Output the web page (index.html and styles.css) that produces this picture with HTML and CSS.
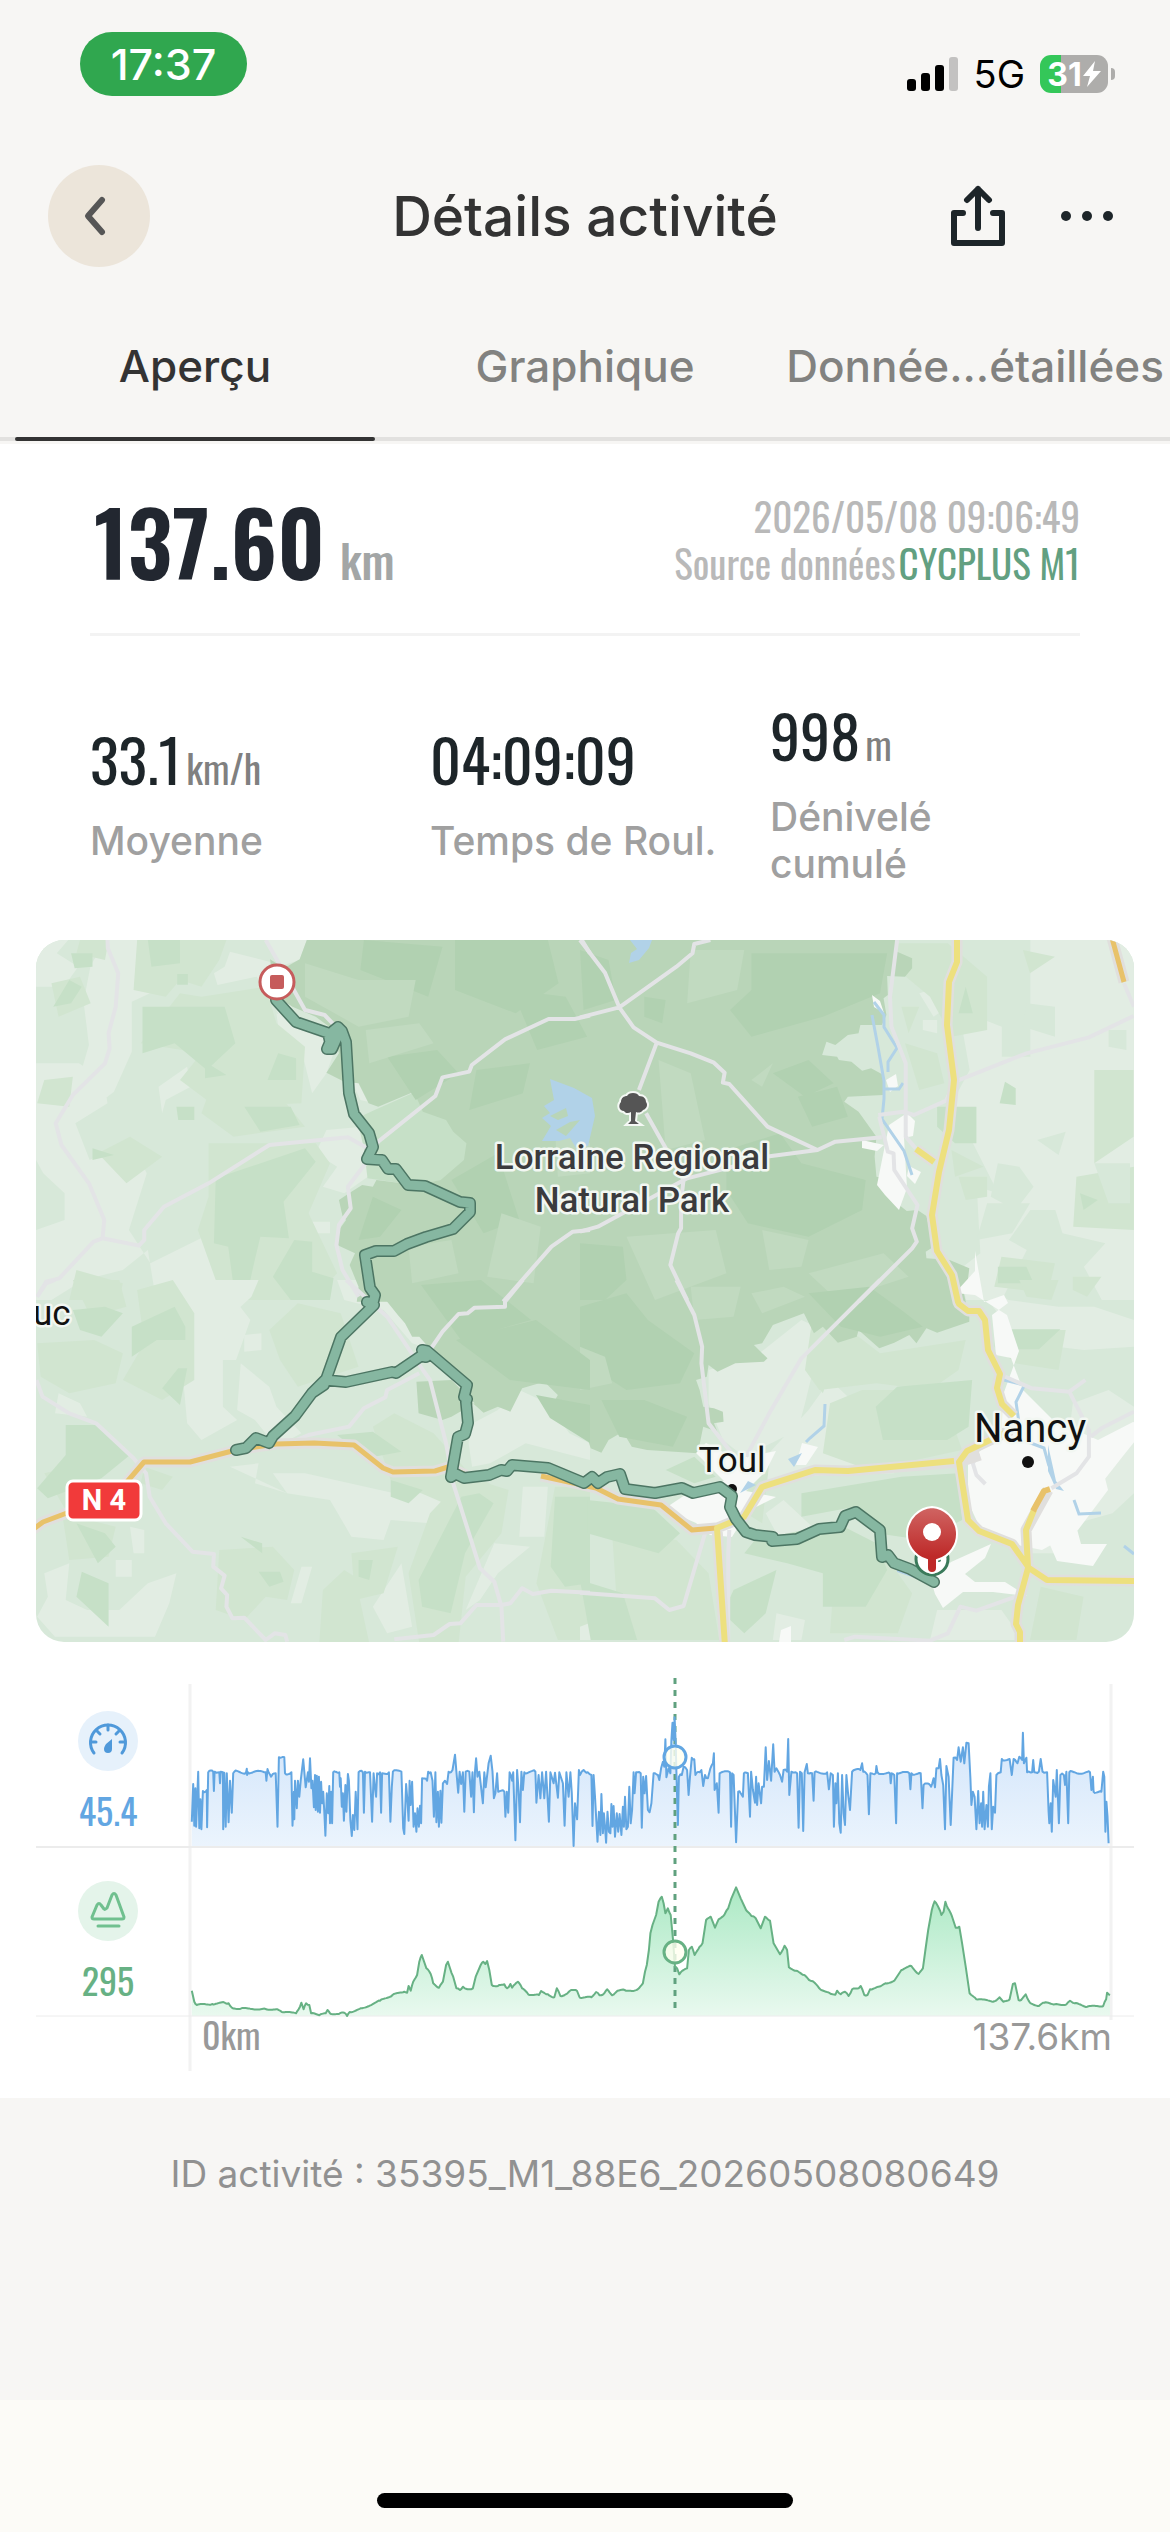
FILE: index.html
```
<!DOCTYPE html>
<html lang="fr">
<head>
<meta charset="utf-8">
<title>Détails activité</title>
<meta name="viewport" content="width=device-width">
<link rel="stylesheet" href="styles.css">
</head>
<body>
<header class="top">
  <div class="status">
    <span class="clock">17:37</span>
    <div class="status-right">
      <svg class="signal" viewBox="0 0 52 34" aria-hidden="true">
        <rect x="0" y="22" width="9" height="12" rx="3"/>
        <rect x="14" y="16" width="9" height="18" rx="3"/>
        <rect x="28" y="8" width="9" height="26" rx="3"/>
        <rect x="42" y="0" width="9" height="34" rx="3" fill="#c3c2c1"/>
      </svg>
      <span class="network">5G</span>
      <div class="battery">
        <span class="battery-level">31<svg viewBox="0 0 18 26" aria-hidden="true"><path d="M12 0 0 15h7L4 26 18 10h-8z" fill="#fff"/></svg></span>
        <span class="battery-tip"></span>
      </div>
    </div>
  </div>
  <div class="titlebar">
    <button class="back" type="button" aria-label="Retour">
      <svg viewBox="0 0 26 42" aria-hidden="true"><path d="M20 5 6 21 20 37" fill="none" stroke="#565656" stroke-width="6" stroke-linecap="round" stroke-linejoin="round"/></svg>
    </button>
    <h1>Détails activité</h1>
    <div class="actions">
      <button class="icon-button" type="button" aria-label="Partager">
        <svg class="share" viewBox="0 0 56 62" aria-hidden="true"><g fill="none" stroke="#1d2529" stroke-width="6" stroke-linecap="round" stroke-linejoin="round"><path d="M28 43V4M17 15 28 4l11 11M13 28H4v30h48V28h-9"/></g></svg>
      </button>
      <button class="icon-button" type="button" aria-label="Plus">
        <svg class="more" viewBox="0 0 54 12" aria-hidden="true"><g fill="#1d2529"><circle cx="6" cy="6" r="5"/><circle cx="27" cy="6" r="5"/><circle cx="48" cy="6" r="5"/></g></svg>
      </button>
    </div>
  </div>
  <nav class="tabs">
    <a class="tab tab-active" href="#apercu">Aperçu</a>
    <a class="tab" href="#graphique">Graphique</a>
    <a class="tab" href="#donnees">Donnée...étaillées</a>
  </nav>
</header>

<main>
  <section class="summary">
    <div class="headline">
      <p class="distance">137.60<span class="distance-unit">km</span></p>
      <p class="source">2026/05/08 09:06:49<br>Source données<span class="device">CYCPLUS M1</span></p>
    </div>
    <dl class="stats">
      <div class="stat"><dd>33.1<span class="unit">km/h</span></dd><dt>Moyenne</dt></div>
      <div class="stat"><dd>04:09:09</dd><dt>Temps de Roul.</dt></div>
      <div class="stat"><dd>998<span class="unit">m</span></dd><dt>Dénivelé cumulé</dt></div>
    </dl>
  </section>

  <svg class="map" viewBox="0 0 1098 702" role="img" aria-label="Parcours">
    <defs>
      <path id="route" d="M240 60 260 82 292 93 294 102 291 109 296 109 300 100 297 91 302 87 306 91 310 102 313 153 318 174 333 193 337 207 331 219 346 220 352 229 360 229 372 245 389 246 424 262 434 263 434 272 417 289 390 297 371 304 358 311 340 311 329 315 334 348 339 355 337 363 331 362 338 365 305 397 288 445 276 453 259 476 237 496 233 503 220 498 210 508 200 510 210 508 220 498 233 503 237 496 259 476 276 453 289 440 310 442 356 432 360 433 385 416 390 417 386 410 391 411 431 445 428 457 431 459 430 462 432 483 429 494 422 497 415 537 420 534 428 538 453 535 465 530 471 531 476 525 512 528 548 543 556 537 562 543 571 537 584 534 589 549 619 553 646 548 657 553 684 547 696 556 694 567 700 579 710 592 719 595 737 597 736 601 761 599 783 589 804 587 809 576 820 572 844 590 846 617 852 615 858 623 874 629 898 642"/>
      <linearGradient id="pin" x1="0" y1="0" x2="0" y2="1"><stop offset="0" stop-color="#d06563"/><stop offset=".75" stop-color="#be2a29"/></linearGradient>
    </defs>
    <rect width="1098" height="702" fill="#d7e8d9"/>

    <!-- land cover, north west -->
    <g transform="translate(-6 -10) scale(.35714 .33333)">
      <path class="pale" d="M17 30h90L75 70l60 40-40 60H17zM215 30h130l-25 110 25 45-60 30v150l-50 120-60 50-40-80 30-110-15-130 20-110zM560 65l110 30 60 100 5 90-40 35V250l-60-110-110 25-10-35 30-20zM665 30h110l-20 60-60 20zM17 400h120l70 50 10 70-90 60 40 110 110-60 50 100-50 170 60 100 150-80 80 80v100l50 70-40 120H380L330 960l-70 60-110 30-90 60H17V900l80-30V790l-60-60-20-40zM360 470l80-60 10 60-70 40-10 40zM690 250l170 90-30 90-40 60-30-130-60-30zM830 600l100-10 50 60-20 80-80 60-60-20 40-60-60-40zM780 875h60v35h-60zM900 450l45 10 20 60-40-10z"/>
      <path class="mid" d="M140 30h80l-10 60-80-20zM300 30h250l-20 60-50 80-60-20-40 50-90-20zM480 200l180-30 30 110 80 70-10 170-240 10-100-80 60-80-170-30 110-150zM60 160l80-20 30 80-90 40zM500 490l180-20 90 120-200 30-90-70zM500 640l300 0 40 60-60 150 80 180-70 80H540L470 900l30-100zM130 1020l130 40-10 50H110zM40 450l80-10-10 90-90-10zM280 620l90 60-100 80-80-90z"/>
      <path class="deep" d="M315 230h230l30 110-80 80-90-80-90 30zM330 30h90v70l-80 10zM115 70h60v40l-50 5zM110 150l35 20-30 50-50 10zM695 370l50 15v65h-80zM600 530h130l25 55-110 20zM520 745l250-90 30 40-90 120 15 110-80-5-20 90-20 100h-30l-20-160-40-10zM680 1040l60-110 50 5v90l60 20-10 65h-110zM410 530h50v40h-45zM412 132h30v32h-30zM490 395l60 40-60 10zM175 655l60 20-60 15zM1080 485l90 85 55 70-10 60-60 50-80 15-130-20-10-90-20-90 50-25z"/>
    </g>
    <!-- land cover, south west -->
    <g transform="translate(-6 340) scale(.35714 .33333)">
      <path class="pale" d="M390 0h250l-20 50-60 60-20 80v190l40 40-100 60-40-50-10-120-10-130-40-170zM590 250l80 70 20 60 70 80-70 40-60-80-50-30zM600 165l48-5v50l-48 5zM560 560l80-10-10 60 90 30-40-60 90 0 250 60 240 0-80 110-60-20-110-10-20 60-90-10-60-110-120-20zM860 0h70l120 60 60 90 20 60-60-20-80-100-110-30zM1300 790l100 10-90 80-50 80-40 30zM1380 620h70l-10 150h-70zM40 880l70-30-10 110 60 30 90 0 80-80 80-30-20 90-40 100H70L20 1010l30-60zM960 980l80-130 30 190-70 20zM760 860h30l-30 110h-30zM240 840h45v50h-45zM280 740l40 10v70h-30zM80 340l60 30 20 40-90-10zM590 940h40v35h-45zM1240 430l70-40 60-60 80 40 60 90 58 30v50l-180-50-100 60-50 10-10-70z"/>
      <path class="mid" d="M20 190l160-10 80 40-20 90-130 30-80-50zM300 30l100-30 60 100v200l-90 60-110-60 60-110zM750 70l120 30 50 160-170 60-50-80-30-90zM120 0h130l20 80-100 30zM40 580l80-20 60 60-80 70zM530 810l150-10 60 70-20 90-60-10-60 70-80-30zM820 930l60-60 30 20 40 200H810zM900 820l130-20-40 140-80 20zM1060 880l60-180 80-90 80 0 60 20-20 130-100 130-20 200H1090zM960 440l60-40 110 60 100 120 110 60-180 30-150-70zM1470 620h98v460h-90l-60-170zM90 700l150 40-20 90-110 10zM320 560l80 30-30 40-60-20z"/>
      <path class="deep" d="M285 140l120-60 30 60v40l-80 0-70 50zM120 90l90-10 50 20-60 70-60-20zM415 265h25l-20 110-50-50zM100 435l90 0 90 90-80 70-150 60-30-30 80-100zM130 730l80 30 30 40-50 50zM145 875l75 35v130l-90-90zM1088 900l120-250 50-10 40 30-80 150-40 180-80-20zM1470 650l98 0v260l-70 10-40-60zM1010 600l90 30-40 40-50-20zM860 465l100-10 80 60-100 20zM640 875h60l10 30-40 15zM920 840h40l-10 60-30-10zM590 770l60 20 0 30z"/>
    </g>
    <!-- land cover, north east -->
    <g transform="translate(544 -10) scale(.35714 .33333)">
      <path class="pale" d="M1060 30h491v1080h-90l-50-100 60-70-120-30-20-70h-70l-60 90 50 30-70 150h-100l-20-90 60-50-10-200 60 20-80-170-60-80 60-120-30-180 120 50v90h80V30zM950 190l60-20 20 60-40 30zM960 270h40v40l-40-10z"/>
      <path class="mid" d="M890 40h140l110 100v160l-100 20-60-120-90-80zM1440 420h110v200l-110 80zM1390 740l161-30v190l-170-10zM1180 980l150 20-20 90-150-20zM900 230h50l-30 80zM910 340l90 30 20 90-70 20zM1040 660l90 50-80 30zM1240 60l90 20-70 50zM1380 1040h80l-40 60-40-20zM1060 740l80 0v60l-60 10z"/>
      <path class="deep" d="M1000 530h110v110h-60l-50-50zM1170 1010h80l20 50h-100zM1400 790l50 20-40 30zM1080 170l20 80-40 0zM1190 455l30 20v50l-45-5z"/>
      <path class="base" d="M1250 220l80 10v90l-90-30zM1170 700l60 10 40 60-50 70-70-40zM1280 630l80-25-20 70zM1480 300h50v60l-50-10zM1140 820l120 0-50 90-100 20zM1440 700h100v120h-60z"/>
    </g>
    <!-- land cover, south east -->
    <g transform="translate(544 340) scale(.35714 .33333)">
      <path class="pale" d="M360 270l130-40 130-110 60 30-50 220-20 80-150 80-60-50-40-110zM700 300l60 60 60 40 60 180-300 10-90 60 30-120 120-140zM1100 0l100 60 140 20 100 0 111 40v80l-140 10-160-20-60-60zM1380 370l100-40 71 50v260l-60 60-100 30-60 90h-100l60-180 60-20zM520 700l50-40 80 80-90 40zM1000 990h180l60 90H980zM0 1040l120-50 100 90H0zM550 1000l80 20-10 60h-80z"/>
      <path class="mid" d="M650 120l130 50 60 50 240-40-20 90-80 60-150-20-160 20-40-60zM700 370l90-40 220 0 60 180-260 60-130-50zM1160 150h200l-20 120-120-20-60-50zM1230 0l110 0-20 60-70-10zM430 560l100-10-20 180-90-60zM720 780l150 70 60 90-40 120H700zM90 760l180 20 90 100 30 200H110zM1290 920l120 30-20 130h-130zM640 280l60 0-20 60z"/>
      <path class="deep" d="M828 380l60-60 210-20-10 140-60 40-180 0zM1165 148h180l-60 60-120 0zM620 640l280-50 160-10 10 140-110 60-130-20-60-80-150 30zM490 780l230-50 110 60 30 80-60 110-120 0 0-100-100-30-120-30zM20 660l180 20 80 80-60 60-200-60zM430 930l120-60-30 130-60 60-60-60zM240 570l80-40 60 60-60 20z"/>
      <path class="deep" d="M0 900l120 40 40 140H30z"/>
    </g>

    <!-- regional park -->
    <g class="park">
      <path transform="translate(-6 -10) scale(.35714 .33333)" d="M775 30 755 88 722 108 690 100 672 88 690 200 735 230 800 260 850 300 865 370 830 428 880 455 920 460 948 520 975 530 1075 485 1100 545 1165 570 1185 605 1222 640 1215 690 1150 750 1080 765 970 750 960 770 930 765 900 785 865 810 875 858 885 870 865 900 860 945 910 970 895 1005 920 1070 915 1115H1570V30z"/>
      <path transform="translate(-6 340) scale(.35714 .33333)" d="M918 0 985 45 1030 105 1050 130 1070 170 1090 170 1115 200 1165 240 1240 370 1270 398 1310 380 1345 395 1378 325 1440 305 1478 345 1465 370 1540 445 1570 490V0zM1082 305 1180 300 1245 370 1180 410 1155 420 1088 400z"/>
      <path transform="translate(544 -10) scale(.35714 .33333)" d="M0 30H890L888 65 930 85 930 115 910 140 860 138 862 195 850 205 858 255 845 285 785 285 780 310 750 315 715 345 690 335 678 375 720 380 725 390 760 395 790 422 815 415 850 435 848 495 750 500 740 515 780 545 830 620 825 680 830 740 885 750 870 805 915 843 945 840 970 858 990 950 968 965 970 985 1035 990 1090 1015 1085 1060 1060 1075 1068 1115H0z"/>
      <path transform="translate(544 340) scale(.35714 .33333)" d="M0 0H1066L1090 110 1090 125 1000 158 970 145 942 190 922 165 880 188 838 205 780 150 775 170 722 188 680 140 655 160 627 100 540 135 510 190 487 195 525 235 515 245 435 250 385 275 360 255 355 290 325 300 335 330 345 380 375 385 400 395 402 425 375 430 385 455 345 440 330 520 188 510 145 500 120 455 80 480 60 518 30 505 15 455 0 450z"/>
    </g>
    <g transform="translate(-6 -10) scale(.35714 .33333)">
      <path class="park-dark" d="M935 30l220 20-40 150-190-80zM1190 30h260l30 130-120 90-170-70zM1000 380l140-20 60 70-120 80zM1250 420l150-20-20 90-150 50zM1350 180l150 20 60 120-140 40zM1180 750l130-80 60 200-100 40zM960 800l80 40-60 80-60 10z"/>
      <path class="park-light" d="M770 100l150 50 160 0-20 110-140 30-150-90zM940 300l150-20 40 60-180 60zM1320 850l110 40-20 170-130-20zM1060 950l120-20 20 100-130 30zM1470 600l98 40v90l-90 10z"/>
    </g>
    <g transform="translate(544 -10) scale(.35714 .33333)">
      <path class="park-dark" d="M480 70h380l-20 120-160 70-200 60-60-80 60-60zM0 60l80 30 20 120-90 30zM180 200l60 10-10 70-50-20zM610 500l110-30 30 90-100 30zM410 660l150-50 60 90 180 50-10 90-150 80-170-40-60-100zM0 940l120 10 10 100-60 60H0zM540 430l100-40 70 70-80 40z"/>
      <path class="park-light" d="M310 60h150l-20 120-140 40zM220 390l90 40 40 200-110 30zM130 920l250-20 30 130-200 80zM480 450l60-50-30 70zM510 900l130 30-20 80-90 10zM640 1030l210-60 70 70-200 70z"/>
    </g>
    <g transform="translate(544 340) scale(.35714 .33333)">
      <path class="park-dark" d="M0 80l130-40 60 80 130 100-40 90-150 20-130-90zM640 40l170-20 90 70 60 50-120 30-110-30zM60 360l120 0 120 50-40 90-150-30z"/>
      <path class="park-light" d="M0 200l70 30 20 80-90 20zM310 20l140 0-20 90-110 10zM480 40l90-20 60 30-120 50z"/>
    </g>
    <path class="park-dark" d="M385 345l60-5 50 40-70 20zM420 400l80-20 54 40v30l-80-10zM500 455l54 10v38l-40-25z"/>

    <!-- towns -->
    <g fill="#f7f9f7">
      <path d="M841 245l12-60 18-12 8 8-2 15-9 2 3 50-8 22-14-15zM848 205l-22-5v8l15 3zM836 55l8 6 4 12-10-6zM850 140l10-6 2 12-8 6zM873 226l12 6-6 12-8-8z"/>
      <path d="M948 362l20-7 4 8-16 12 4 40 15 3 12 32 30 30 45 20 35-18 14 4-24 30-22 28-28 30 8 30 26 0-14 22-36-5-14-32-30-22-12-62 2-50 16-44-12-36-32-20-20-2 20-22 0-20z"/>
      <path d="M932 520l40-30 50 0 40 20 10 40-30 40-36 20-30-6-30-12-14-30z"/>
      <path d="M670 503l30 16 40-8-10 20-20 20 30 6-28 14-16 26-22-2-14-12-32-14 30-20 30-8-28-28z"/>
      <path d="M895 640l20-18 40-18-6 14-20 16 10 8 30 0 22 14-34-4-30 0-20 16-8-14z"/>
      <path d="M766 503l16 4-12 18-10 0zM745 690l10-4 0 16-12 0z"/>
    </g>

    <!-- water -->
    <g fill="#b1d2e8">
      <path d="M514 139 538 148 556 158 559 176 552 206 540 208 534 198 523 201 506 201 515 186 506 178 514 173 508 166 518 160z"/>
      <path d="M594 0h22l-3 8-10 12-10 3 2-10 6-4z"/>
      <path d="M766 513l-8 14-6-8zM720 545l-16 8 8-12zM861 626l28 6-4 8-24-8zM1012 505l8 36 8 10-8-2-8-18z"/>
    </g>
    <path d="M514 176l16-8 2 8-10 4zM520 190l14-8 10-2-14 16z" fill="#b9d5b8"/>
    <g fill="none" stroke="#b1d2e8" stroke-width="3">
      <path d="M838 62l10 13v12l13 21-9 14v10M836 75l6 32 6 34v18l-2 20 22 32 8 24M848 149l15 0 4-6"/>
      <path d="M789 464l-1 22-14 12-4 4M988 446l-8 16 4 28M968 440l20 5M992 502l16 6 5 18M1038 560l5 14 22-1M1088 606l10 8"/>
    </g>

    <!-- minor roads -->
    <g class="road">
      <g transform="translate(-6 -10) scale(.35714 .33333)">
        <path d="M217 30 218 55 247 130 240 230 220 310 223 355 210 400 120 495 72 580 88 645 165 760 208 870 203 925 305 947 320 930V900L375 830 500 760 670 645 890 622 945 655M203 925 178 935 82 1045 45 1055 20 1100M660 30 700 105 770 240 825 255 865 300M1568 257 1525 267H1452L1330 328 1237 405 1230 425 1155 442 1135 498 975 635 940 700 890 770 898 835 865 885 858 945 875 1020 920 1100M1568 900 1520 905 1460 950 1325 1115M1545 30 1568 70"/>
      </g>
      <g transform="translate(-6 340) scale(.35714 .33333)">
        <path d="M20 50 45 10 70 0M18 300 35 350 110 400 185 430 290 535 325 580 335 650 380 730 455 815 515 822 513 860 545 887 535 925 552 945 550 980 567 1015 600 1013 660 1080 685 1060 715 1065 720 1085M885 0 1000 110 1100 270 1120 300 1165 490 1185 610 1260 865 1300 905 1320 980 1325 1085M1380 0 1330 65V80L1245 83 1225 100 1200 102 1155 155 1120 210M1090 280 1000 330 995 352 935 385 893 440 780 465 700 500M1568 938 1460 932 1408 942 1378 925 1345 970 1320 975 1250 975 1205 1030 1175 1032 1130 1065 1020 1078"/>
      </g>
      <g transform="translate(544 -10) scale(.35714 .33333)">
        <path d="M0 30 70 128 110 232 150 292 215 338 310 370 375 398 405 428 400 458 418 462 525 590 665 660 715 635 845 622M0 262 110 232 270 110 315 70 320 42 365 30M215 338 165 480M185 550 290 750M520 680 665 660M525 683 300 745 50 890 0 905M290 750 283 810V895L275 910 253 1005 300 1110M888 30 868 200 872 290 912 400V620L940 655M835 555 905 545 935 555 1025 512 1050 455 1250 370 1425 322 1550 258M1523 160 1551 230M838 560 862 665 878 670 880 720 945 825 930 895 943 935 930 955 780 1115"/>
      </g>
      <g transform="translate(544 340) scale(.35714 .33333)">
        <path d="M270 0 320 105 342 200 340 250 360 430 425 520M840 0 620 235 530 400 465 530M0 938 210 955 250 990 290 978 350 760M415 1080V820L418 750M1190 290 1265 325 1370 335 1415 300M1370 335 1425 450V530L1390 580 1320 625M1430 470 1460 445 1551 395M1115 520 1100 550 1110 585 1135 612M740 1080 770 1070 980 1082 1030 1060 1065 980 1110 992 1220 950"/>
      </g>
    </g>

    <!-- main roads -->
    <g id="main-roads" fill="none" stroke-linejoin="round">
      <g class="casing">
        <path d="M-4 590 7 582 60 562M90 543 108 522 154 522 200 510 240 504 278 503 318 505 347 528 357 532 399 531 412 527 430 535M505 536 560 548 582 559 625 565 656 590 680 588"/>
        <path d="M921 -4V22L913 42 911 85 918 140 913 190 903 232 896 275 901 311 916 335 922 362 923 364 932 371H943L949 380 952 410 964 434 961 448 966 464 978 476M944 515 923 522 812 531 779 530 726 547 708 577 681 588 689 706M975 490 931 511 923 522 932 580 943 591 976 604 993 628 1011 640 1100 641M1012 550 990 590 992 628 982 665 980 684 984 692V706M880 209 898 222M1076 -2 1088 42"/>
      </g>
      <path stroke="#e8c26a" stroke-width="5" d="M-4 590 7 582 60 562M90 543 108 522 154 522 200 510 240 504 278 503 318 505 347 528 357 532 399 531 412 527 430 535M505 536 560 548 582 559 625 565 656 590 680 588M1076 -2 1088 42"/>
      <path stroke="#ede07e" stroke-width="6" d="M921 -4V22L913 42 911 85 918 140 913 190 903 232 896 275 901 311 916 335 922 362 923 364 932 371H943L949 380 952 410 964 434 961 448 966 464 978 476M918 521 812 531 779 530 726 547 708 577 681 588 689 706M975 490 931 511 923 522 932 580 943 591 976 604 993 628 1011 640 1100 641M998 570 990 590 992 628 982 665 980 684 984 692V706M880 209 898 222"/>
      <path stroke="#e8c26a" stroke-width="6" d="M1014 549 1008 551 997 571"/>
    </g>

    <circle cx="696" cy="549" r="5" fill="#111"/>
    <g fill="none" stroke-linecap="round" stroke-linejoin="round">
      <use href="#route" stroke="#4c7563" stroke-width="12"/>
      <use href="#route" stroke="#86b7a1" stroke-width="9"/>
    </g>

    <circle cx="241" cy="42" r="17" fill="#fff" stroke="#c65c5c" stroke-width="3"/>
    <rect x="234" y="35" width="14" height="14" rx="2" fill="#c65c5c"/>

    <circle cx="896" cy="619" r="16" fill="#fff" stroke="#3a7a5a" stroke-width="3"/>
    <circle cx="903" cy="620" r="2" fill="#3a7a5a"/>
    <path d="M896 567a27 27 0 0 1 5 53v8a5 5 0 0 1-10 0v-8a27 27 0 0 1 5-53z" fill="url(#pin)" stroke="#fff" stroke-width="2"/>
    <circle cx="896" cy="592" r="9" fill="#fff"/>

    <g stroke="#f4f8f4" stroke-width="4" paint-order="stroke" fill="#555">
      <path d="M597 153c3 0 5 1 6 3 5 0 7 3 7 6 2 2 1 7-3 8-2 3-5 3-7 2l-1 9 4 3h-11l3-3v-9c-3 2-6 1-7-1-5 0-6-6-3-9 0-4 3-6 6-6 1-2 3-3 6-3z"/>
    </g>

    <g class="label">
      <text x="596" y="229" font-size="35" font-weight="500" text-anchor="middle">Lorraine Regional</text>
      <text x="596" y="272" font-size="35" font-weight="500" text-anchor="middle">Natural Park</text>
      <text class="city" x="696" y="532" font-size="35" text-anchor="middle">Toul</text>
      <text class="city" x="994" y="502" font-size="40" text-anchor="middle">Nancy</text>
      <text class="city" x="-3" y="385" font-size="35">uc</text>
    </g>
    <circle cx="992" cy="522" r="6" fill="#111"/>

    <rect x="31" y="541" width="74" height="39" rx="6" fill="#f13a3a" stroke="#fff" stroke-width="3"/>
    <text class="shield" x="68" y="570" text-anchor="middle">N 4</text>
  </svg>

  <section class="charts">
    <svg class="plot" viewBox="0 0 1098 394" aria-hidden="true">
      <defs>
        <linearGradient id="speed-fill" gradientUnits="userSpaceOnUse" x1="0" y1="40" x2="0" y2="169"><stop offset="0" stop-color="#cfe3fa"/><stop offset="1" stop-color="#ebf4fd"/></linearGradient>
        <linearGradient id="climb-fill" gradientUnits="userSpaceOnUse" x1="0" y1="210" x2="0" y2="339"><stop offset="0" stop-color="#abe9c4"/><stop offset="1" stop-color="#e9f9ef"/></linearGradient>
      </defs>
      <path d="M154 7V394M1075 7V343" stroke="#f2f2f2" stroke-width="3"/>
      <path id="speed-area" fill="url(#speed-fill)"/>
      <path id="climb-area" fill="url(#climb-fill)"/>
      <path d="M0 170H1098" stroke="#ececec" stroke-width="2"/>
      <path d="M0 339H1098" stroke="#ececec" stroke-width="1"/>
      <path d="M639 1V331" stroke="#60a17f" stroke-width="3" stroke-dasharray="6 6"/>
      <path id="speed-line" fill="none" stroke="#62a6e2" stroke-width="2" stroke-linejoin="round"/>
      <path id="climb-line" fill="none" stroke="#67b184" stroke-width="2" stroke-linejoin="round"/>
      <circle cx="639" cy="80" r="11" fill="#fffff0" fill-opacity=".8" stroke="#62a6e2" stroke-width="3"/>
      <circle cx="639" cy="275" r="11" fill="#fffff0" fill-opacity=".8" stroke="#67b184" stroke-width="3"/>
    </svg>
    <div class="metric metric-speed">
      <svg class="badge" viewBox="0 0 60 60" aria-hidden="true"><circle cx="30" cy="30" r="30" fill="#e6f1fb"/><g fill="none" stroke="#4f99da" stroke-width="3" stroke-linecap="round"><path d="M16 42A17.500 17.500 0 1 1 44 42"/><path d="M30 14v5M13 31h5M42 31h5M19 20l3 3M41 20l-3 3"/></g><path d="M34 28v10a4 4 0 0 1-8 0c0-2 1-3 2-5z" fill="#4f99da"/></svg>
      <span>45.4</span>
    </div>
    <div class="metric metric-climb">
      <svg class="badge" viewBox="0 0 60 60" aria-hidden="true"><circle cx="30" cy="30" r="30" fill="#e4f4ea"/><g fill="none" stroke="#70c08f" stroke-width="3" stroke-linecap="round" stroke-linejoin="round"><path d="M14 36l5-12q2-3 4 0l3 4q1 1 3-1l5-13q2-3 4 0l8 22q0 2-2 2H16q-2 0-2-2zM20 45h21"/></g></svg>
      <span>295</span>
    </div>
    <div class="axis"><span class="axis-start">0km</span><span class="axis-end">137.6km</span></div>
  </section>
</main>

<footer class="activity-id">ID activité : 35395_M1_88E6_20260508080649</footer>
<div class="home"><span class="home-bar"></span></div>
<script src="charts.js"></script>
</body>
</html>
```
FILE: styles.css
```
* { box-sizing: border-box; }
body {
  margin: 0;
  min-height: 100vh;
  display: flex;
  flex-direction: column;
  background: #f7f6f4;
  color: #333;
  font-family: Inter, "Noto Sans", sans-serif;
}
h1, p, dl, dd, dt { margin: 0; font-weight: 400; }
button { border: 0; padding: 0; background: none; cursor: pointer; }
svg { display: block; }

/* header */
.status {
  display: flex;
  justify-content: space-between;
  height: 132px;
  padding: 32px 55px 0 80px;
}
.clock {
  width: 167px;
  height: 64px;
  border-radius: 32px;
  background: #30a74f;
  color: #fff;
  font-size: 43px;
  font-weight: 500;
  line-height: 64px;
  text-align: center;
}
.status-right {
  display: flex;
  align-items: center;
  height: 38px;
  margin-top: 23px;
  gap: 15px;
  color: #000;
}
.signal { width: 52px; height: 34px; }
.network { font-size: 38px; font-weight: 400; line-height: 38px; }
.battery { display: flex; align-items: center; gap: 3px; }
.battery-level {
  display: flex;
  align-items: center;
  justify-content: center;
  gap: 1px;
  width: 68px;
  height: 38px;
  border-radius: 11px;
  background: linear-gradient(90deg, #34c759 21px, #aeadab 21px);
  color: #fff;
  font-size: 32px;
  font-weight: 700;
}
.battery-level svg { width: 18px; height: 26px; }
.battery-tip { width: 4px; height: 12px; border-radius: 0 4px 4px 0; background: #aeadab; }

.titlebar {
  display: grid;
  grid-template-columns: 1fr auto 1fr;
  align-items: center;
  height: 168px;
  padding: 0 48px;
}
.back {
  display: flex;
  align-items: center;
  justify-content: center;
  width: 102px;
  height: 102px;
  padding-right: 8px;
  border-radius: 50%;
  background: #ece5da;
}
.back svg { width: 26px; height: 42px; }
h1 { font-size: 55px; font-weight: 500; line-height: 66px; }
.actions { display: flex; justify-content: flex-end; align-items: center; gap: 54px; padding-right: 8px; }
.share { width: 56px; height: 62px; }
.more { width: 54px; height: 12px; }

.tabs {
  display: grid;
  grid-template-columns: repeat(3, 1fr);
  height: 144px;
  border-bottom: 3px solid #f7f6f4;
  box-shadow: inset 0 -4px #e2e1df;
}
.tab {
  display: flex;
  flex-direction: column;
  justify-content: space-between;
  align-items: center;
  padding-top: 38px;
  color: #828280;
  font-size: 44px;
  font-weight: 500;
  line-height: 56px;
  text-decoration: none;
  white-space: nowrap;
}
.tab-active { color: #333; }
.tab-active::after {
  content: "";
  width: calc(100% - 30px);
  height: 4px;
  border-radius: 4px;
  background: #333;
}

/* totals */
main { background: #fff; }
.summary, .metric, .axis-start {
  font-family: Oswald, "Liberation Sans Narrow", "Roboto Condensed", "Liberation Sans", sans-serif;
}
.summary { padding: 48px 90px 0; }
.headline {
  display: flex;
  justify-content: space-between;
  height: 144px;
  border-bottom: 3px solid #f3f3f3;
}
.distance { padding-left: 4px; color: #222730; font-size: 88px; font-weight: 600; line-height: 96px; }
.distance-unit { margin-left: 15px; color: #a3a6a6; font-size: 46px; font-weight: 500; }
.source { color: #b9b9b9; font-size: 39px; line-height: 47px; text-align: right; }
.device { margin-left: 3px; color: #62a081; }
.stats {
  display: grid;
  grid-template-columns: repeat(3, 340px);
  align-items: center;
  height: 304px;
  padding-top: 10px;
}
.stat { display: flex; flex-direction: column; gap: 24px; }
.stat dd { color: #1d2529; font-size: 60px; line-height: 70px; }
.unit { margin-left: 5px; color: #808080; font-size: 39px; line-height: 0; }
.stat dt {
  max-width: 300px;
  color: #a0a0a0;
  font-family: Inter, "Noto Sans", sans-serif;
  font-size: 39px;
  font-weight: 500;
  line-height: 47px;
}
.stat:last-child dt { width: 200px; }

/* map */
.map { width: calc(100% - 72px); height: auto; margin: 0 36px; border-radius: 28px; }
.pale { fill: #e2ede3; }
.base { fill: #d7e8d9; }
.mid { fill: #d1e5d0; }
.deep { fill: #c6e0c7; }
.park { fill: #b9d5b8; }
.park-dark { fill: #b1d1b1; }
.park-light { fill: #c1dac0; }
.road path { fill: none; stroke: #e3e4e6; stroke-width: 4px; stroke-linejoin: round; vector-effect: non-scaling-stroke; }
.casing { stroke: #e0dfdd; stroke-width: 11px; }
.label text { fill: #3b3b3d; stroke: #f2f7f2; stroke-width: 5px; stroke-linejoin: round; paint-order: stroke; font-family: Roboto, sans-serif; }
.label .city { fill: #111; }
.shield { fill: #fff; font-family: Roboto, sans-serif; font-size: 29px; font-weight: 700; }

/* charts */
.charts {
  display: grid;
  grid-template-columns: 144px 1fr;
  grid-template-rows: 170px 169px 55px;
  margin: 35px 36px 0;
  padding-bottom: 27px;
}
.plot { grid-area: 1 / 1 / 4 / 3; width: 100%; height: auto; }
.metric {
  display: flex;
  flex-direction: column;
  align-items: center;
  padding-top: 34px;
  gap: 12px;
  font-size: 36px;
  line-height: 54px;
}
.metric-speed { grid-area: 1 / 1; color: #62a6e2; }
.metric-climb { grid-area: 2 / 1; color: #67b184; }
.badge { width: 60px; height: 60px; }
.axis {
  grid-area: 3 / 2;
  display: flex;
  justify-content: space-between;
  padding: 0 22px;
  color: #999;
  line-height: 42px;
}
.axis-start { font-size: 36px; line-height: 36px; }
.axis-end { font-size: 37px; }

/* footer */
.activity-id {
  flex: 1;
  min-height: 160px;
  padding-top: 54px;
  color: #919191;
  font-size: 37px;
  line-height: 44px;
  text-align: center;
}
.home { display: flex; justify-content: center; align-items: flex-end; height: 132px; padding-bottom: 24px; background: #fcfbf7; }
.home-bar { width: 416px; height: 15px; border-radius: 8px; background: #000; }
```
FILE: charts.js
```
// Samples are "x,y" pairs, 2.8 units per pixel across and 3 per pixel down.
// The second half of the ride is offset by 1540 units.
const speedFirst = "453,485 457,372 460,497 463,385 465,500 471,335 474,505 477,418 480,508 484,393 495,390 496,502 499,337 513,335 515,393 517,335 530,337 532,370 534,335 540,337 541,508 544,338 548,500 551,340 556,487 560,362 565,458 569,340 572,335 605,337 607,326 608,345 610,337 660,337 662,362 665,327 668,337 675,350 688,340 693,500 697,292 712,292 714,340 732,337 735,497 739,395 740,478 742,362 747,445 750,362 754,410 758,362 765,298 772,382 778,337 781,365 784,295 788,385 791,362 795,442 798,345 800,450 803,347 806,455 809,350 812,458 815,365 818,430 821,395 824,455 827,527 831,400 835,460 838,378 840,490 843,395 846,490 849,337 866,337 868,380 870,355 873,440 876,400 879,482 883,375 886,455 890,342 893,362 897,482 901,528 904,465 908,510 912,395 917,508 920,337 932,337 935,458 938,335 952,337 958,485 962,340 966,385 969,410 972,340 980,337 983,458 986,340 1005,337 1009,485 1013,382 1016,335 1040,335 1045,505 1048,522 1053,372 1057,425 1060,482 1063,362 1066,435 1070,365 1074,500 1078,460 1082,515 1085,445 1089,500 1092,437 1095,490 1098,355 1112,362 1115,335 1122,337 1127,362 1131,470 1135,337 1138,487 1142,395 1145,500 1149,392 1152,488 1156,370 1162,362 1168,372 1172,335 1183,330 1190,284 1194,335 1199,398 1203,335 1207,372 1212,337 1216,455 1220,335 1230,335 1235,410 1239,337 1243,457 1246,335 1249,295 1253,350 1258,335 1268,430 1272,337 1276,382 1284,310 1290,287 1295,335 1299,415 1303,400 1308,340 1311,395 1328,395 1331,470 1335,395 1339,458 1343,337 1350,362 1353,337 1359,541 1364,330 1368,392 1372,487 1376,335 1380,390 1384,337 1415,335 1418,428 1424,345 1429,415 1434,337 1440,415 1445,335 1453,485 1457,337 1466,370 1470,338 1478,413 1482,337 1492,370 1497,497 1502,337 1508,410 1513,337 1517,400 1522,558 1526,430 1532,478 1537,330";
const speedSecond = "0,345 10,330 22,337 32,345 35,498 38,345 42,410 49,545 53,455 57,525 60,402 64,520 67,460 70,500 73,548 77,455 81,515 85,520 88,432 91,500 94,438 98,530 103,460 107,515 111,462 116,525 120,440 123,500 126,410 130,508 134,500 138,380 142,490 146,450 150,337 153,400 157,337 170,340 173,503 177,350 181,400 185,348 190,450 195,457 200,430 206,340 218,345 222,360 227,325 232,305 236,320 239,238 242,352 248,325 253,340 256,240 259,188 262,240 265,172 268,250 270,335 274,495 277,350 285,345 290,320 300,330 304,405 308,350 313,293 320,298 323,345 335,337 340,330 345,378 350,345 358,355 365,325 372,310 375,280 377,390 383,370 388,458 391,340 420,337 423,500 426,340 430,345 437,547 443,395 450,400 456,410 459,340 470,340 476,470 479,335 484,390 490,428 493,350 496,435 500,370 507,430 510,380 515,380 520,262 524,360 529,303 535,362 541,253 545,335 550,325 560,345 566,365 570,330 580,335 583,237 586,405 592,335 608,340 612,503 616,335 621,340 625,513 629,337 635,312 638,340 650,340 654,422 657,337 692,337 697,388 702,340 708,345 711,500 715,370 718,430 722,340 726,490 730,518 734,345 738,460 742,495 746,345 751,405 756,450 762,335 785,330 790,310 793,335 805,345 809,463 813,340 828,340 830,318 833,337 868,340 870,370 873,340 880,345 885,490 888,340 922,340 925,388 928,340 954,340 959,445 962,375 980,375 983,380 990,355 994,382 998,325 1004,325 1008,297 1012,345 1017,375 1022,508 1026,318 1032,350 1038,495 1042,400 1046,293 1056,300 1060,262 1066,305 1072,262 1076,310 1082,248 1088,250 1093,355 1096,435 1100,395 1105,410 1110,508 1115,393 1119,490 1123,430 1126,500 1129,395 1133,508 1138,435 1142,500 1145,380 1149,340 1153,508 1157,440 1162,458 1166,345 1178,337 1181,297 1203,297 1209,345 1214,297 1225,310 1230,290 1238,300 1240,218 1243,310 1250,293 1252,337 1266,337 1269,300 1272,337 1285,335 1290,297 1295,335 1308,337 1312,455 1314,490 1318,430 1321,515 1325,360 1332,410 1335,330 1341,490 1345,345 1355,345 1358,375 1362,335 1367,490 1370,337 1428,337 1432,390 1436,350 1438,395 1460,395 1465,335 1468,350 1471,515 1474,425 1477,468 1480,550";
const climbFirst = "453,992 460,1025 467,1035 510,1032 545,1028 556,1030 565,1043 590,1046 660,1047 693,1048 705,1056 745,1060 752,1048 760,1028 766,1048 773,1030 782,1035 787,1060 810,1066 828,1060 833,1050 840,1060 865,1062 880,1058 888,1068 895,1056 930,1045 980,1022 1015,1005 1048,995 1056,998 1060,978 1066,992 1073,965 1084,945 1090,905 1097,885 1110,925 1122,942 1129,970 1145,983 1156,965 1165,915 1170,905 1176,925 1185,950 1194,985 1204,990 1212,980 1225,988 1240,985 1248,950 1262,915 1269,905 1275,912 1280,903 1286,930 1293,975 1310,978 1328,973 1336,985 1345,972 1350,983 1366,965 1378,985 1395,1003 1425,1005 1431,993 1450,1003 1468,1012 1475,985 1485,1008 1500,1003 1515,990 1532,993 1538,1010";
const climbSecond = "0,1013 32,1012 45,996 55,1006 68,1000 76,988 90,1006 105,992 125,990 145,993 165,985 176,970 182,935 187,915 193,870 197,820 203,795 213,765 220,725 229,710 234,730 239,760 246,745 254,765 260,835 266,920 272,925 278,943 290,930 300,925 305,870 313,860 321,885 335,860 343,850 353,780 366,770 378,803 388,778 405,763 415,745 424,715 437,682 450,715 465,750 480,768 492,775 506,805 518,770 532,782 542,850 560,883 573,857 580,870 585,922 605,932 628,945 645,962 657,968 670,985 700,1000 715,1004 720,992 730,1003 742,995 752,1008 762,988 780,985 786,978 796,1005 805,1005 812,988 835,980 855,970 880,962 900,930 928,918 948,942 960,925 967,870 975,810 985,750 993,724 1005,745 1012,765 1018,755 1023,725 1030,745 1042,770 1052,803 1062,800 1070,850 1080,920 1091,1000 1110,1018 1160,1024 1175,1012 1185,1025 1203,1018 1212,972 1218,970 1228,1020 1235,1020 1248,1003 1260,1028 1285,1038 1300,1028 1330,1033 1362,1033 1372,1022 1385,1030 1420,1040 1465,1038 1473,1018 1476,998 1484,1005";

const parse = (text, shift) => text.split(" ").map(pair => {
  const [x, y] = pair.split(",").map(Number);
  return [(x + shift) / 2.8 - 6, y / 3 - 17];
});

function withNoise(points, size) {
  const out = [points[0]];
  for (let i = 1; i < points.length; i++) {
    const [x0, y0] = points[i - 1], [x1, y1] = points[i];
    const steps = Math.abs(y1 - y0) < 10 ? Math.floor((x1 - x0) / 1.2) : 0;
    for (let k = 1; k < steps; k++) {
      const wobble = Math.sin((x0 + k) * 12.9 + i * 7.3) * size;
      out.push([x0 + (x1 - x0) * k / steps, y0 + (y1 - y0) * k / steps + wobble]);
    }
    out.push([x1, y1]);
  }
  return out;
}

function draw(name, points, floor) {
  const line = "M" + points.map(p => p[0].toFixed(1) + " " + p[1].toFixed(1)).join("L");
  const start = points[0][0].toFixed(1);
  document.getElementById(name + "-line").setAttribute("d", line);
  document.getElementById(name + "-area").setAttribute("d", line + "V" + floor + "H" + start + "Z");
}

draw("speed", withNoise([...parse(speedFirst, 0), ...parse(speedSecond, 1540)], 1.5), 169);
draw("climb", withNoise([...parse(climbFirst, 0), ...parse(climbSecond, 1540)], 0.7), 339);
```
